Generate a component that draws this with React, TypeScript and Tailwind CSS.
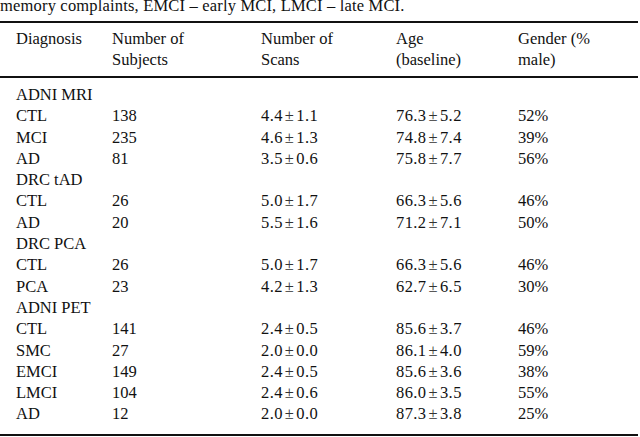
import React from "react";

type Row = { label: string; group?: boolean; n?: string; scans?: string; age?: string; gender?: string };

const rows: Row[] = [
  { label: "ADNI MRI", group: true },
  { label: "CTL", n: "138", scans: "4.4 ± 1.1", age: "76.3 ± 5.2", gender: "52%" },
  { label: "MCI", n: "235", scans: "4.6 ± 1.3", age: "74.8 ± 7.4", gender: "39%" },
  { label: "AD", n: "81", scans: "3.5 ± 0.6", age: "75.8 ± 7.7", gender: "56%" },
  { label: "DRC tAD", group: true },
  { label: "CTL", n: "26", scans: "5.0 ± 1.7", age: "66.3 ± 5.6", gender: "46%" },
  { label: "AD", n: "20", scans: "5.5 ± 1.6", age: "71.2 ± 7.1", gender: "50%" },
  { label: "DRC PCA", group: true },
  { label: "CTL", n: "26", scans: "5.0 ± 1.7", age: "66.3 ± 5.6", gender: "46%" },
  { label: "PCA", n: "23", scans: "4.2 ± 1.3", age: "62.7 ± 6.5", gender: "30%" },
  { label: "ADNI PET", group: true },
  { label: "CTL", n: "141", scans: "2.4 ± 0.5", age: "85.6 ± 3.7", gender: "46%" },
  { label: "SMC", n: "27", scans: "2.0 ± 0.0", age: "86.1 ± 4.0", gender: "59%" },
  { label: "EMCI", n: "149", scans: "2.4 ± 0.5", age: "85.6 ± 3.6", gender: "38%" },
  { label: "LMCI", n: "104", scans: "2.4 ± 0.6", age: "86.0 ± 3.5", gender: "55%" },
  { label: "AD", n: "12", scans: "2.0 ± 0.0", age: "87.3 ± 3.8", gender: "25%" },
];

const cols = "grid grid-cols-[96px_149px_135px_122px_1fr] pl-[16px]";

function PM({ v }: { v?: string }) {
  if (!v) return null;
  const [a, b] = v.split(" ± ");
  return (
    <div className="tracking-[0.4px]">
      {a}
      <span className="mx-[2px] text-[#333]">±</span>
      {b}
    </div>
  );
}

export default function App() {
  return (
    <div
      className="w-[640px] h-[437px] overflow-hidden bg-white text-[#111] text-[16.5px]"
      style={{ fontFamily: '"Liberation Serif", "Times New Roman", serif' }}
    >
      <div className="mt-[-5px] leading-[21px] whitespace-nowrap tracking-[0.18px]">
        memory complaints, EMCI – early MCI, LMCI – late MCI.
      </div>
      <div className="mt-[5px] h-[2px] w-[638px] bg-[#111]" />
      <div className={`${cols} pt-[5px] pb-[6px] leading-[21px]`}>
        <div>Diagnosis</div>
        <div>
          Number of
          <br />
          Subjects
        </div>
        <div>
          Number of
          <br />
          Scans
        </div>
        <div>
          Age
          <br />
          (baseline)
        </div>
        <div>
          Gender (%
          <br />
          male)
        </div>
      </div>
      <div className="h-[2px] w-[638px] bg-[#111]" />
      <div className="pt-[6px] pb-[9px]">
        {rows.map((r, i) => (
          <div key={i} className={`${cols} h-[21.3px] leading-[21px] whitespace-nowrap`}>
            <div className={r.group ? "col-span-5" : ""}>{r.label}</div>
            {!r.group && (
              <>
                <div>{r.n}</div>
                <PM v={r.scans} />
                <PM v={r.age} />
                <div>{r.gender}</div>
              </>
            )}
          </div>
        ))}
      </div>
      <div className="h-[2px] w-[638px] bg-[#111]" />
    </div>
  );
}
